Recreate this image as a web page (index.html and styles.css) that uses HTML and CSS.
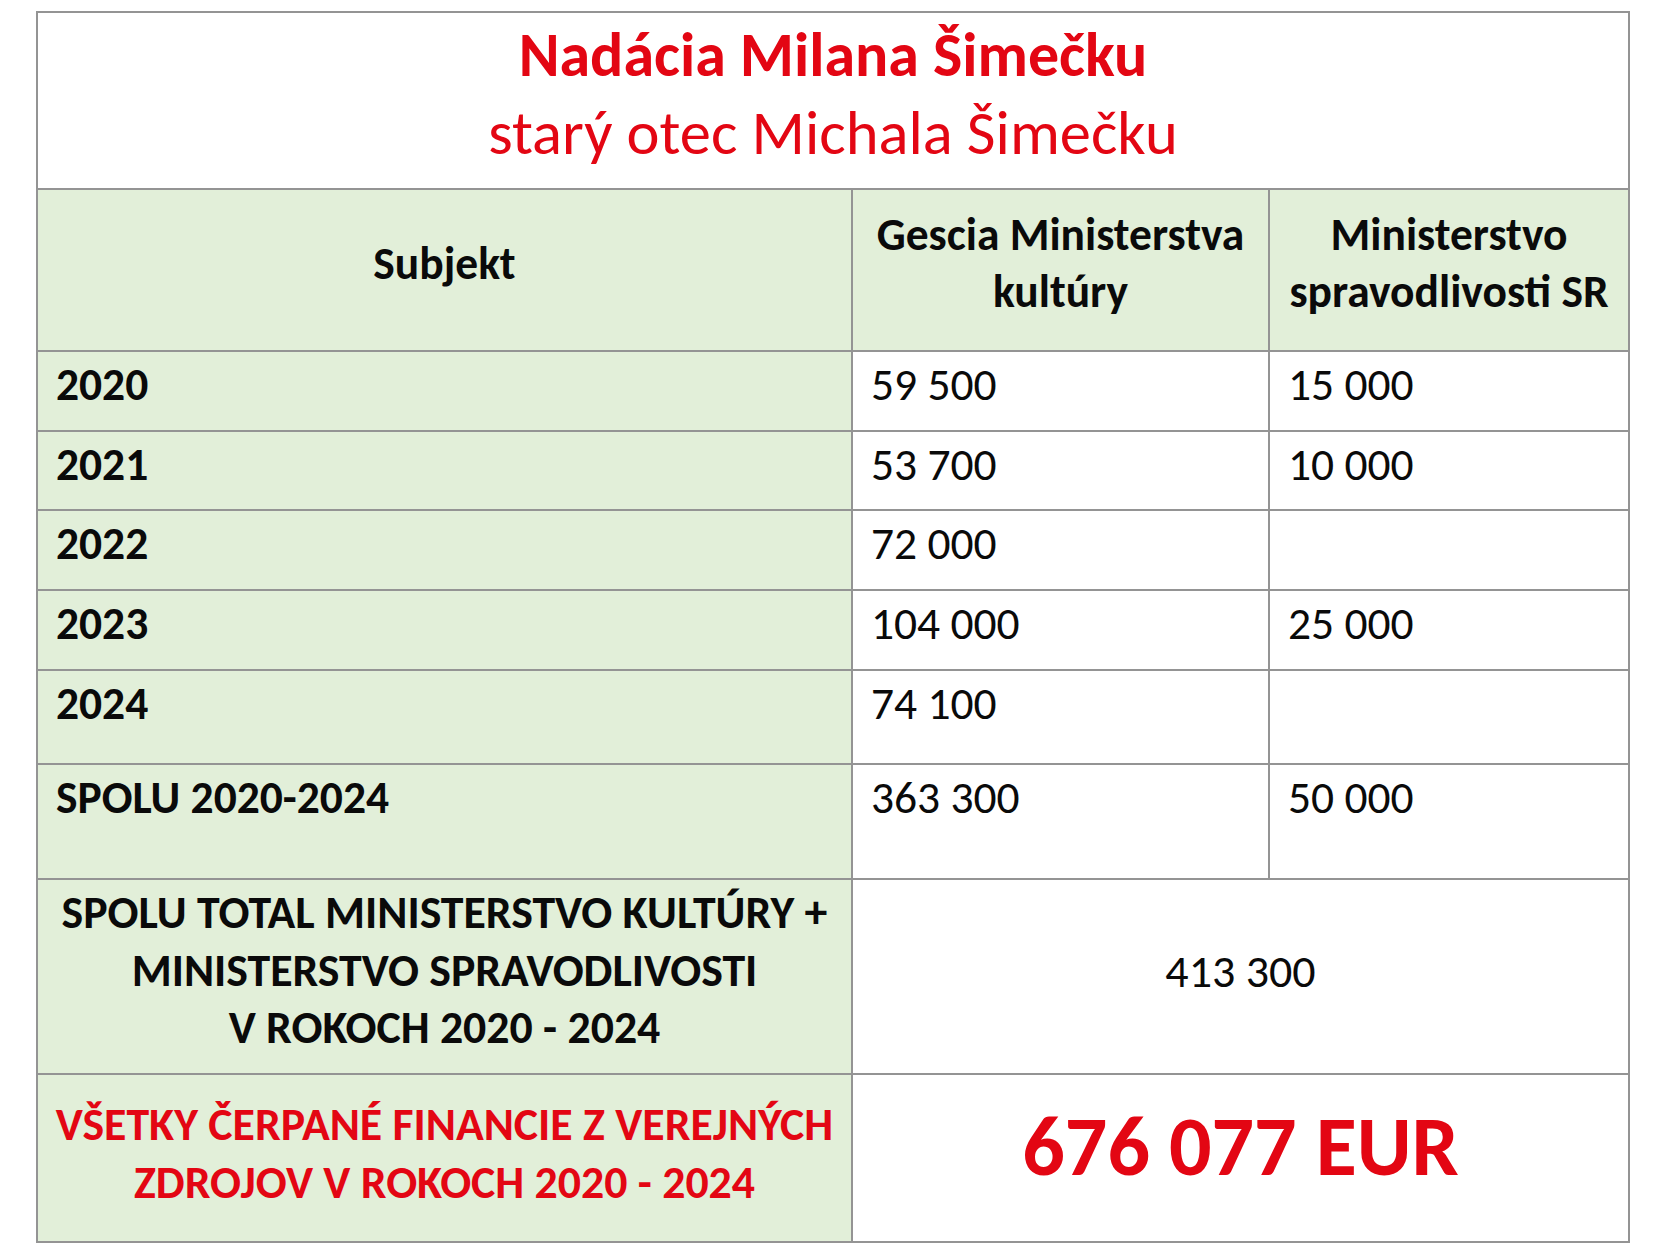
FILE: index.html
```html
<!DOCTYPE html>
<html lang="sk">
<head>
<meta charset="utf-8">
<title>Nadácia Milana Šimečku</title>
<link rel="stylesheet" href="styles.css">
</head>
<body>
<table class="grant-table">
  <colgroup>
    <col class="col-subject">
    <col class="col-culture">
    <col class="col-justice">
  </colgroup>
  <tbody>
    <tr class="row-title">
      <td colspan="3" class="title-cell">
        <div class="title-main">Nadácia Milana Šimečku</div>
        <div class="title-sub">starý otec Michala Šimečku</div>
      </td>
    </tr>
    <tr class="row-head">
      <td class="head green">Subjekt</td>
      <td class="head green">Gescia Ministerstva<br>kultúry</td>
      <td class="head green">Ministerstvo<br>spravodlivosti SR</td>
    </tr>
    <tr class="row-year">
      <td class="label green">2020</td>
      <td class="num">59 500</td>
      <td class="num">15 000</td>
    </tr>
    <tr class="row-year row-year-b">
      <td class="label green">2021</td>
      <td class="num">53 700</td>
      <td class="num">10 000</td>
    </tr>
    <tr class="row-year">
      <td class="label green">2022</td>
      <td class="num">72 000</td>
      <td class="num"></td>
    </tr>
    <tr class="row-year">
      <td class="label green">2023</td>
      <td class="num">104 000</td>
      <td class="num">25 000</td>
    </tr>
    <tr class="row-last">
      <td class="label green">2024</td>
      <td class="num">74 100</td>
      <td class="num"></td>
    </tr>
    <tr class="row-sum">
      <td class="label green">SPOLU 2020-2024</td>
      <td class="num">363 300</td>
      <td class="num">50 000</td>
    </tr>
    <tr class="row-total">
      <td class="summary green">SPOLU TOTAL MINISTERSTVO KULTÚRY +<br>MINISTERSTVO SPRAVODLIVOSTI<br>V ROKOCH 2020 - 2024</td>
      <td colspan="2" class="total-num">413 300</td>
    </tr>
    <tr class="row-all">
      <td class="summary summary-red green">VŠETKY ČERPANÉ FINANCIE Z VEREJNÝCH<br>ZDROJOV V ROKOCH 2020 - 2024</td>
      <td colspan="2" class="grand-num">676 077 EUR</td>
    </tr>
  </tbody>
</table>
</body>
</html>
```

FILE: styles.css
```css
html, body {
  margin: 0;
  padding: 0;
  background: #ffffff;
}

body {
  padding: 11px 0 0 36px;
  font-family: "Carlito", "Lato", "Liberation Sans", sans-serif;
  color: #0a0a0a;
}

.grant-table {
  border-collapse: collapse;
  table-layout: fixed;
  width: 1592px;
}

.col-subject { width: 815px; }
.col-culture { width: 417px; }
.col-justice { width: 360px; }

.grant-table td {
  border: 2px solid #949494;
  padding: 0 18px;
  font-size: 45.5px;
  line-height: 58px;
}

.grant-table td.green {
  background: #e2efd9;
}

.row-title { height: 177px; }
.row-head { height: 162px; }
.row-year { height: 80px; }
.row-year-b { height: 79px; }
.row-last { height: 94px; }
.row-sum { height: 115px; }
.row-total { height: 195px; }
.row-all { height: 168px; }

.grant-table td.title-cell {
  text-align: center;
  vertical-align: middle;
  color: #e30613;
  padding-bottom: 14px;
}

.title-main {
  font-weight: 700;
  font-size: 62px;
  line-height: 78px;
}

.title-sub {
  font-weight: 400;
  font-size: 62.5px;
  line-height: 78px;
}

.grant-table td.head {
  text-align: center;
  vertical-align: middle;
  font-weight: 700;
  line-height: 57px;
  padding-bottom: 14px;
}

.grant-table td.label {
  vertical-align: top;
  font-weight: 700;
  padding-top: 4px;
}

.grant-table td.num {
  vertical-align: top;
  font-weight: 400;
  padding-top: 4px;
}

.grant-table td.summary {
  text-align: center;
  vertical-align: middle;
  font-weight: 700;
  font-size: 45.8px;
  line-height: 57.5px;
  white-space: nowrap;
  padding: 0 4px 12px;
}

.grant-table td.summary-red {
  color: #e30613;
  padding-bottom: 9px;
}

.grant-table td.total-num {
  text-align: center;
  vertical-align: middle;
  font-weight: 400;
  font-size: 46px;
  padding-bottom: 11px;
}

.grant-table td.grand-num {
  text-align: center;
  vertical-align: middle;
  font-weight: 700;
  font-size: 84px;
  line-height: 90px;
  color: #e30613;
  padding-bottom: 22px;
}
```
